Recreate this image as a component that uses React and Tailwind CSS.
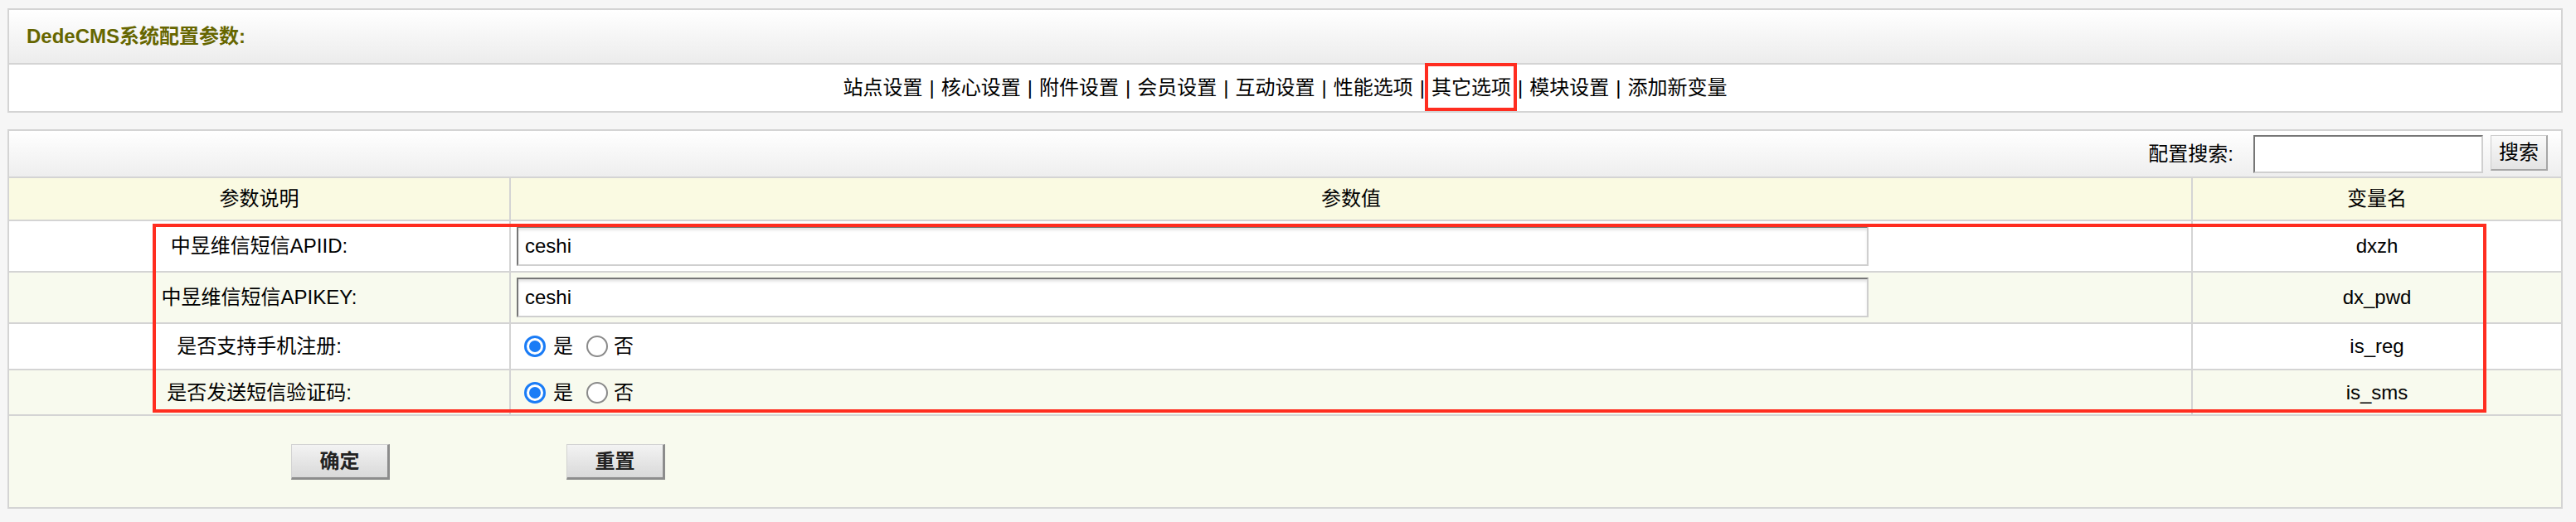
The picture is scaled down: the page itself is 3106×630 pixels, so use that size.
import React from "react";

const navItems = ["站点设置", "核心设置", "附件设置", "会员设置", "互动设置", "性能选项", "其它选项", "模块设置", "添加新变量"];

// heights include the 2px bottom border
const rows = [
  { label: "中昱维信短信APIID:", kind: "text", value: "ceshi", name: "dxzh", h: "h-[62px]", bg: "bg-white" },
  { label: "中昱维信短信APIKEY:", kind: "text", value: "ceshi", name: "dx_pwd", h: "h-[62px]", bg: "bg-[#f8faee]" },
  { label: "是否支持手机注册:", kind: "radio", name: "is_reg", h: "h-[56px]", bg: "bg-white" },
  { label: "是否发送短信验证码:", kind: "radio", name: "is_sms", h: "h-[55px]", bg: "bg-[#f8faee]" },
];

const Radio = ({ checked }) =>
  checked ? (
    <span className="shrink-0 w-[26px] h-[26px] rounded-full border-[3px] border-[#1a7cf6] bg-white flex items-center justify-center">
      <span className="w-[14px] h-[14px] rounded-full bg-[#1a7cf6]" />
    </span>
  ) : (
    <span className="shrink-0 block w-[26px] h-[26px] rounded-full border-2 border-[#8a8a8a] bg-white" />
  );

const CoolButton = ({ children, className = "" }) => (
  <button
    className={`w-[119px] h-[43px] bg-linear-to-b from-[#f3f3f3] to-[#d9d9d9] border-t border-l border-[#d2d2d2] border-r-[3px] border-b-[3px] border-r-[#8c8c8c] border-b-[#8c8c8c] text-[24px] font-bold text-[#222] ${className}`}
  >
    {children}
  </button>
);

const Row = ({ row }) => (
  <div className={`flex border-b-2 border-[#d4d4d4] ${row.h} ${row.bg}`}>
    <div className="w-[603px] flex items-center justify-center">{row.label}</div>
    <div className="w-[2028px] border-l-2 border-[#d4d4d4] flex items-center pl-[7px]">
      {row.kind === "text" ? (
        <input
          readOnly
          defaultValue={row.value}
          className="w-[1630px] h-[48px] bg-white border-2 border-t-[#767676] border-l-[#767676] border-b-[#cfcfcf] border-r-[#cfcfcf] pl-[8px] text-[24px] text-black outline-none shadow-[inset_0_3px_3px_rgba(0,0,0,0.10)]"
        />
      ) : (
        <div className="flex items-center pl-[9px]">
          <Radio checked />
          <span className="ml-[9px]">是</span>
          <span className="ml-[16px] flex">
            <Radio />
          </span>
          <span className="ml-[7px]">否</span>
        </div>
      )}
    </div>
    <div className="flex-1 border-l-2 border-[#d4d4d4] flex items-center justify-center">{row.name}</div>
  </div>
);

export default function App() {
  return (
    <div className="w-[3106px] h-[630px] bg-[#f6f6f6] pt-[10px] text-[24px] text-black font-['Liberation_Sans','Noto_Sans_CJK_SC',sans-serif]">
      {/* top panel */}
      <div className="ml-[9px] w-[3081px] border-2 border-[#d4d4d4] bg-white">
        <div className="h-[66px] flex items-center pl-[21px] bg-linear-to-b from-white to-[#ececec] border-b-2 border-[#d4d4d4]">
          <b className="text-[#666600]">DedeCMS系统配置参数:</b>
        </div>
        <div className="h-[56px] flex justify-center items-stretch">
          {navItems.map((item, i) => (
            <React.Fragment key={item}>
              {i > 0 && <span className="flex items-center mx-[8px]">|</span>}
              <span className="relative flex items-center">
                {item}
                {item === "其它选项" && (
                  <span className="absolute -left-[8px] -right-[7px] -top-[2px] bottom-0 border-4 border-[#ff2d20]" />
                )}
              </span>
            </React.Fragment>
          ))}
        </div>
      </div>

      {/* config table */}
      <div className="mt-[20px] ml-[9px] w-[3081px] border-2 border-[#d4d4d4] bg-white">
        <div className="h-[57px] flex items-center justify-end pr-[16px] bg-linear-to-b from-white to-[#eeeeee] border-b-2 border-[#d4d4d4]">
          <span>配置搜索:</span>
          <input className="ml-[24px] w-[277px] h-[46px] bg-white border-2 border-t-[#767676] border-l-[#767676] border-b-[#cfcfcf] border-r-[#cfcfcf] outline-none" />
          <button className="self-start mt-[5px] ml-[9px] w-[69px] h-[43px] bg-linear-to-b from-[#fafafa] to-[#e4e4e4] border border-[#cccccc] border-r-2 border-b-2 border-r-[#a6a6a6] border-b-[#a6a6a6]">
            搜索
          </button>
        </div>
        <div className="h-[52px] flex bg-[#fafae2] border-b-2 border-[#d4d4d4]">
          <div className="w-[603px] flex items-center justify-center">参数说明</div>
          <div className="w-[2028px] border-l-2 border-[#d4d4d4] flex items-center justify-center">参数值</div>
          <div className="flex-1 border-l-2 border-[#d4d4d4] flex items-center justify-center">变量名</div>
        </div>
        <div className="relative">
          {rows.map((row) => (
            <Row key={row.name} row={row} />
          ))}
          <span className="absolute left-[173px] top-[3px] w-[2814px] h-[228px] border-4 border-[#ff2d20] pointer-events-none" />
        </div>
        <div className="h-[110px] bg-[#f8faee] flex items-start pt-[34px] pl-[340px]">
          <CoolButton>确定</CoolButton>
          <CoolButton className="ml-[213px]">重置</CoolButton>
        </div>
      </div>
    </div>
  );
}
